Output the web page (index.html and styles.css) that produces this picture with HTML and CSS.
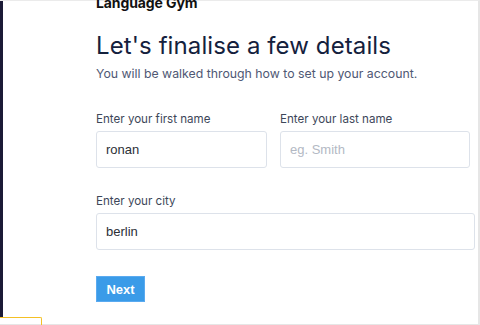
FILE: index.html
```html
<!DOCTYPE html>
<html>
<head>
<meta charset="utf-8">
<link rel="stylesheet" href="styles.css">
</head>
<body>
<div class="frame">
  <div class="sidebar"></div>
  <main class="main">
    <div class="brand">Language Gym</div>
    <h1 class="title">Let's finalise a few details</h1>
    <p class="subtitle">You will be walked through how to set up your account.</p>
    <div class="row">
      <div class="field first">
        <label class="label">Enter your first name</label>
        <input class="input" type="text" value="ronan">
      </div>
      <div class="field last">
        <label class="label">Enter your last name</label>
        <input class="input" type="text" placeholder="eg. Smith">
      </div>
    </div>
    <div class="field city">
      <label class="label">Enter your city</label>
      <input class="input" type="text" value="berlin">
    </div>
    <button class="btn">Next</button>
  </main>
</div>
<div class="tab"></div>
</body>
</html>
```
FILE: styles.css
```css
html, body {
  margin: 0;
  padding: 0;
  background: #fff;
  width: 480px;
  height: 325px;
  overflow: hidden;
}
.frame {
  display: flex;
  border-top: 1px solid #ebebeb;
  border-right: 2px solid #e6e6e6;
  border-bottom: 1px solid #e6e6e6;
  box-sizing: border-box;
  height: 325px;
}
.sidebar {
  width: 3px;
  height: 317px;
  background: #1b1a36;
  flex: none;
}
.main {
  padding-left: 93px;
  font-family: Inter, "Noto Sans", sans-serif;
  flex: 1;
}
.brand {
  font-weight: 700;
  font-size: 14px;
  line-height: 16px;
  margin-top: -6px;
  color: #111;
  letter-spacing: -0.1px;
}
.title {
  margin: 20px 0 0;
  font-weight: 400;
  font-size: 24px;
  line-height: 30px;
  color: #14213d;
  letter-spacing: 0.1px;
}
.subtitle {
  margin: 5px 0 0;
  font-size: 12.3px;
  line-height: 16px;
  color: #4f5874;
}
.row {
  display: flex;
  gap: 13px;
  margin-top: 30px;
}
.field {
  display: flex;
  flex-direction: column;
}
.first { width: 171px; }
.last { width: 190px; }
.city { width: 379px; margin-top: 26px; }
.label {
  font-size: 11.6px;
  line-height: 14px;
  color: #3d4759;
  margin-bottom: 5px;
}
.input {
  height: 37px;
  box-sizing: border-box;
  border: 1px solid #dde2ea;
  border-radius: 3px;
  padding: 0 9px;
  font-family: "Liberation Sans", Arial, sans-serif;
  font-size: 13px;
  color: #2b2f36;
  outline: none;
  width: 100%;
}
.input::placeholder {
  color: #b3b9c4;
}
.btn {
  margin-top: 26px;
  width: 49px;
  height: 26px;
  background: #3a9be8;
  border: 1px solid #5aaaf0;
  color: #fff;
  font-family: "Liberation Sans", Arial, sans-serif;
  font-weight: 700;
  font-size: 13px;
  padding: 0;
  display: block;
}
.tab {
  position: absolute;
  left: 0;
  top: 317px;
  width: 41px;
  height: 12px;
  border-top: 1.5px solid #f4c025;
  border-right: 1.5px solid #f4c025;
  border-top-right-radius: 2px;
  background: transparent;
}
```
